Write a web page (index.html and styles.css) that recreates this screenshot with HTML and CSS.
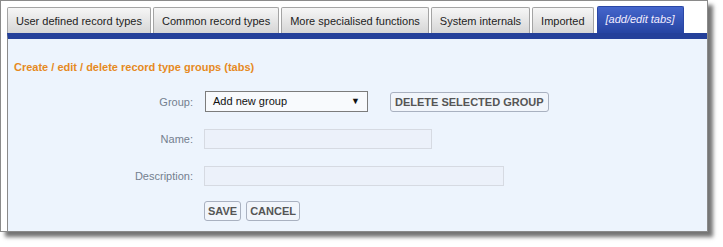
FILE: index.html
```html
<!DOCTYPE html>
<html lang="en">
<head>
  <meta charset="UTF-8" />
  <title>Record type groups</title>
  <link rel="stylesheet" href="styles.css">
</head>
<body>

  <div class="window">
    <ul class="tabs">
      <li><a href="#">User defined record types</a></li>
      <li><a href="#">Common record types</a></li>
      <li><a href="#">More specialised functions</a></li>
      <li><a href="#">System internals</a></li>
      <li><a href="#">Imported</a></li>
      <li class="active"><a href="#">[add/edit tabs]</a></li>
    </ul>

    <div class="panel">
      <h2 class="panel-title">Create / edit / delete record type groups (tabs)</h2>

      <div class="form">
        <label class="form-label">Group:</label>
        <div class="form-field">
          <div class="select">Add new group <span class="select-arrow">&#9660;</span></div>
          <button class="btn btn-delete">Delete selected group</button>
        </div>

        <label class="form-label">Name:</label>
        <div class="form-field">
          <input class="input input-name" type="text">
        </div>

        <label class="form-label">Description:</label>
        <div class="form-field">
          <input class="input input-desc" type="text">
        </div>

        <span></span>
        <div class="form-field form-actions">
          <button class="btn">Save</button>
          <button class="btn">Cancel</button>
        </div>
      </div>
    </div>
  </div>

</body>
</html>
```

FILE: styles.css
```css
* { box-sizing: border-box; margin: 0; padding: 0; }

html, body {
  min-height: 247px;
}

body {
  font-family: 'Liberation Sans', Arial, sans-serif;
  font-size: 11px;
  background-color: #fff;
  color: #222;
}

.window {
  width: 708px;
  height: 232px;
  border: 1px solid #8a8a8a;
  background-color: #fff;
  padding: 5px 0 0 6px;
  display: flex;
  flex-direction: column;
  box-shadow: 5px 5px 4px rgba(0,0,0,0.55);
}

/* tabs */
.tabs {
  list-style: none;
  display: flex;
  align-items: flex-end;
  gap: 2px;
  height: 27px;
}

.tabs li a {
  display: block;
  height: 26px;
  line-height: 26px;
  padding: 0 8px;
  border: 1px solid #a4a4a4;
  border-bottom: none;
  border-radius: 2px 2px 0 0;
  background: linear-gradient(#f6f6f6, #d6d6d6);
  color: #222;
  text-decoration: none;
  white-space: nowrap;
}

.tabs li.active {
  margin-left: 1px;
}

.tabs li.active a {
  height: 27px;
  line-height: 25px;
  border-color: #2a47a6;
  background: linear-gradient(#4566cc, #2644a2);
  color: #f4eeff;
  font-style: italic;
}

/* panel */
.panel {
  flex: 1;
  border-left: 1px solid #8a8a8a;
  border-top: 6px solid #24409a;
  background-color: #edf4fd;
  padding: 22px 0 0 5px;
}

.panel-title {
  font-size: 11px;
  line-height: 13px;
  font-weight: bold;
  color: #e68a1f;
  padding-left: 1px;
}

.form {
  display: grid;
  grid-template-columns: 180px 1fr;
  column-gap: 11px;
  row-gap: 17px;
  margin-top: 17px;
  align-items: center;
}

.form-label {
  text-align: right;
  color: #747f8f;
}

.form-field {
  display: flex;
  align-items: center;
}

.select {
  width: 163px;
  height: 21px;
  margin-left: 1px;
  border: 1px solid #7c7c7c;
  background-color: #f8fafd;
  color: #111;
  padding: 0 7px;
  line-height: 19px;
  display: flex;
  justify-content: space-between;
}

.select-arrow {
  font-size: 9px;
}

.input {
  height: 20px;
  border: 1px solid #d6dae2;
  background-color: #ecf1fa;
}

.input-name { width: 228px; }
.input-desc { width: 300px; }

.btn {
  font-family: inherit;
  font-size: 11px;
  font-weight: bold;
  text-transform: uppercase;
  color: #555;
  background-color: #f1f5fb;
  border: 1px solid #a9b1c0;
  border-radius: 3px;
  height: 20px;
  padding: 0 3px;
}

.btn-delete {
  margin-left: 22px;
  padding: 0 4px;
}

.form-actions {
  gap: 5px;
  margin-top: -2px;
}
```
